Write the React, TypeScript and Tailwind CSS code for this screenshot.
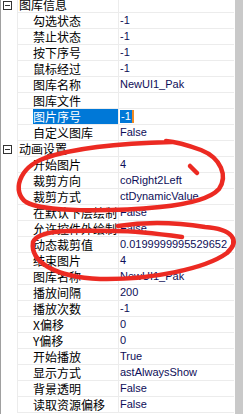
import React from "react";

type Row = { name: string; value?: string; group?: boolean; selected?: boolean };

const rows: Row[] = [
  { name: "图库信息", group: true },
  { name: "勾选状态", value: "-1" },
  { name: "禁止状态", value: "-1" },
  { name: "按下序号", value: "-1" },
  { name: "鼠标经过", value: "-1" },
  { name: "图库名称", value: "NewUI1_Pak" },
  { name: "图库文件", value: "" },
  { name: "图片序号", value: "-1", selected: true },
  { name: "自定义图库", value: "False" },
  { name: "动画设置", group: true },
  { name: "开始图片", value: "4" },
  { name: "裁剪方向", value: "coRight2Left" },
  { name: "裁剪方式", value: "ctDynamicValue" },
  { name: "在默认下层绘制", value: "False" },
  { name: "允许控件外绘制", value: "False" },
  { name: "动态裁剪值", value: "0.0199999995529652" },
  { name: "结束图片", value: "4" },
  { name: "图库名称", value: "NewUI1_Pak" },
  { name: "播放间隔", value: "200" },
  { name: "播放次数", value: "-1" },
  { name: "X偏移", value: "0" },
  { name: "Y偏移", value: "0" },
  { name: "开始播放", value: "True" },
  { name: "显示方式", value: "astAlwaysShow" },
  { name: "背景透明", value: "False" },
  { name: "读取资源偏移", value: "False" },
];

function Collapse() {
  return (
    <div className="w-[9px] h-[9px] border border-[#333] flex items-center justify-center">
      <div className="w-[5px] h-px bg-[#333]" />
    </div>
  );
}

function PropRow({ row }: { row: Row }) {
  return (
    <div className="flex h-[16px] shrink-0">
      {/* gutter */}
      <div className="w-[16px] flex items-center pl-[2px]">{row.group && <Collapse />}</div>
      {/* name */}
      <div
        className={`w-[102px] border-l border-r border-b border-[#ececec] flex items-center whitespace-nowrap overflow-hidden text-[12px] leading-none ${
          row.group ? "pl-[1px]" : "pl-[15px]"
        }`}
      >
        <span className={`h-full flex items-center flex-1 ${row.selected ? "bg-[#0078d7] text-white" : "text-black"}`}>
          {row.name}
        </span>
      </div>
      {/* value */}
      <div className="w-[115px] border-b border-[#ececec] flex items-center pl-px whitespace-nowrap overflow-hidden font-['Liberation_Sans',sans-serif] text-[11px] leading-none text-[#0e0e58]">
        {row.selected ? (
          <span className="flex items-center h-[13px]">
            <span className="bg-[#0078d7] text-white h-full flex items-center px-px">{row.value}</span>
            <span className="w-[2px] h-full bg-[#f08a24]" />
          </span>
        ) : (
          row.value
        )}
      </div>
    </div>
  );
}

export default function App() {
  return (
    <div className="w-[243px] h-[414px] overflow-hidden relative bg-white flex font-['Noto_Sans_CJK_SC','Noto_Sans',sans-serif]">
      <div className="w-px bg-[#a0a0a0] shrink-0" />
      <div className="w-[233px] flex flex-col -mt-[3px] shrink-0">
        {rows.map((r, i) => (
          <PropRow key={i} row={r} />
        ))}
      </div>
      <div className="w-px bg-white shrink-0" />
      <div className="w-[8px] bg-[#c9c9c9] shrink-0" />

      {/* red annotations */}
      <svg className="absolute inset-0 pointer-events-none" width="243" height="414" viewBox="0 0 243 414">
        <g fill="none" stroke="#ec2a22" strokeWidth="4.5" strokeLinecap="round" strokeLinejoin="round">
          <path d="M172 142 C130 143 80 146 45 158 C18 168 12 192 26 202 C42 212 110 212 160 207 C190 204 210 199 219 189 C228 176 221 158 201 150 C190 146 178 142 166 141" />
          <path d="M197 173 L190 166" />
          <path d="M182 237 C160 234 135 231 115 231 C80 231 40 228 33 242 C30 262 55 277 100 279 C150 280 205 269 227 253 C241 240 232 229 205 227 C180 223 150 221 118 226" />
        </g>
      </svg>
    </div>
  );
}
